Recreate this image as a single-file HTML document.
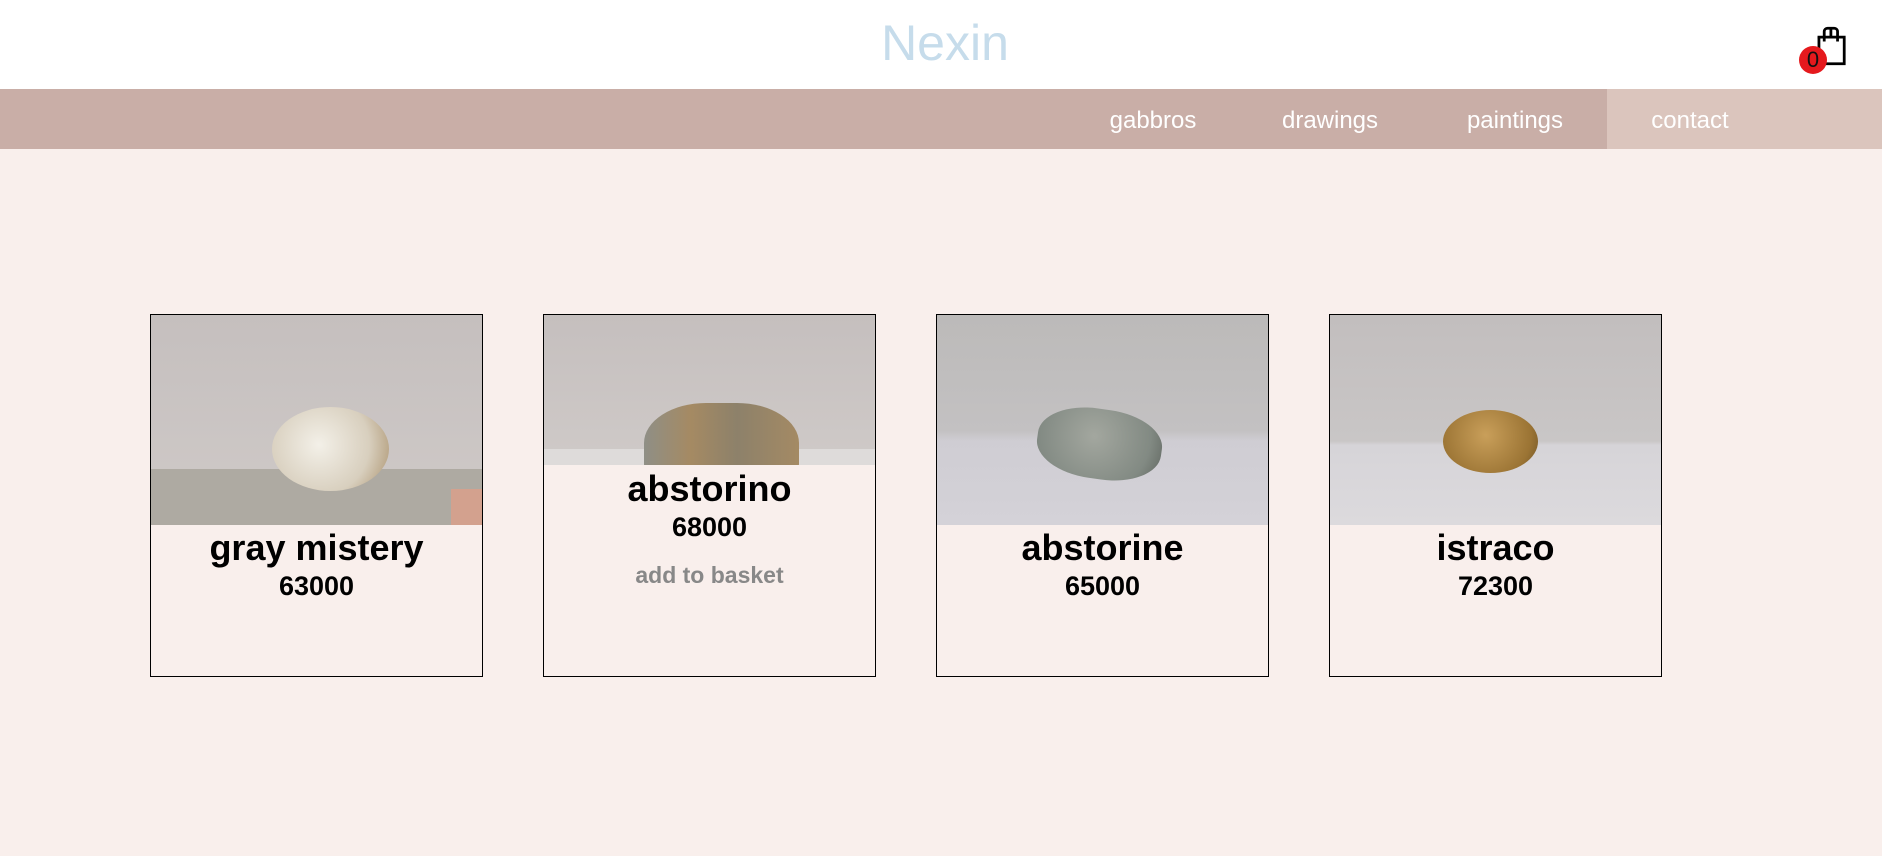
<!DOCTYPE html>
<html><head><style>
*{margin:0;padding:0;box-sizing:border-box}
body{width:1882px;height:856px;background:#f9efec;font-family:"Liberation Sans",sans-serif;position:relative;overflow:hidden}
.hdr{position:absolute;left:0;top:0;width:1882px;height:89px;background:#fff}
.logo{position:absolute;left:0;width:1890px;top:14px;text-align:center;font-size:50px;color:#c6dceb;font-weight:normal}
.nav{position:absolute;left:0;top:89px;width:1882px;height:60px;background:#c9aea7}
.nav .ct{position:absolute;left:1607px;top:0;width:275px;height:60px;background:#dbc5bd}
.nav span{position:absolute;top:18px;font-size:24px;color:#fff;transform:translateX(-50%)}
.card{position:absolute;top:314px;width:333px;height:363px;border:1px solid #000;background:#f9efec;text-align:center}
.img{width:331px;height:210px;position:relative;overflow:hidden;background:linear-gradient(#c5bfbe,#cfcac8)}
.t{font-weight:bold;font-size:36px;color:#000;margin-top:2px;line-height:42px}
.p{font-weight:bold;font-size:27px;color:#000;line-height:34px}
.a{font-weight:bold;font-size:23px;color:#888;margin-top:18px}
.st{position:absolute;border-radius:50%}
</style></head><body>
<div class="hdr"><div class="logo">Nexin</div>
<svg style="position:absolute;left:1814px;top:26px" width="36" height="40" viewBox="0 0 32 36"><path d="M3 10h24v24H9" fill="none" stroke="#000" stroke-width="2.5"/><path d="M9 14V5a3 3 0 0 1 3-3h6a3 3 0 0 1 3 3v9M15 2v8" fill="none" stroke="#000" stroke-width="2.5"/><rect x="3" y="10" width="2.5" height="12" fill="#000"/></svg>
<div style="position:absolute;left:1799px;top:46px;width:28px;height:28px;border-radius:50%;background:#e5191d;color:#111;font-size:22px;line-height:28px;text-align:center">0</div>
</div>
<div class="nav"><div class="ct"></div>
<span style="left:1153px">gabbros</span><span style="left:1330px">drawings</span><span style="left:1515px">paintings</span><span style="left:1690px">contact</span></div>

<div class="card" style="left:150px"><div class="img">
<div style="position:absolute;left:0;top:154px;width:331px;height:56px;background:#aeaaa2"></div>
<div style="position:absolute;left:300px;top:174px;width:31px;height:36px;background:#d3a18e"></div>
<div class="st" style="left:121px;top:92px;width:117px;height:84px;background:radial-gradient(circle at 40% 45%,#f3f0e8,#d8cfbe 60%,#a88e68)"></div>
</div><div class="t">gray mistery</div><div class="p">63000</div></div>

<div class="card" style="left:543px"><div class="img" style="height:150px">
<div style="position:absolute;left:0;top:134px;width:331px;height:16px;background:#dedbda"></div>
<div class="st" style="left:100px;top:88px;width:155px;height:100px;border-radius:40%;background:linear-gradient(90deg,#8f8f86,#a58a63 30%,#8d816a 60%,#a48a64)"></div>
</div><div class="t" style="margin-top:3px">abstorino</div><div class="p">68000</div><div class="a">add to basket</div></div>

<div class="card" style="left:936px"><div class="img" style="background:linear-gradient(#bcbab9,#c3c1c2 55%,#cfcdd3 60%,#d4d2d8)">
<div class="st" style="left:100px;top:94px;width:125px;height:70px;border-radius:45%;transform:rotate(8deg);background:radial-gradient(circle at 45% 40%,#a3a79f,#828a83 70%,#5f655f)"></div>
</div><div class="t">abstorine</div><div class="p">65000</div></div>

<div class="card" style="left:1329px"><div class="img" style="background:linear-gradient(#c2bebe,#c9c6c6 60%,#d6d4d8 62%,#dcdadd)">
<div class="st" style="left:113px;top:95px;width:95px;height:63px;background:radial-gradient(circle at 45% 40%,#c99f5a,#9b7434 70%,#6a4f25)"></div>
</div><div class="t">istraco</div><div class="p">72300</div></div>
</body></html>
